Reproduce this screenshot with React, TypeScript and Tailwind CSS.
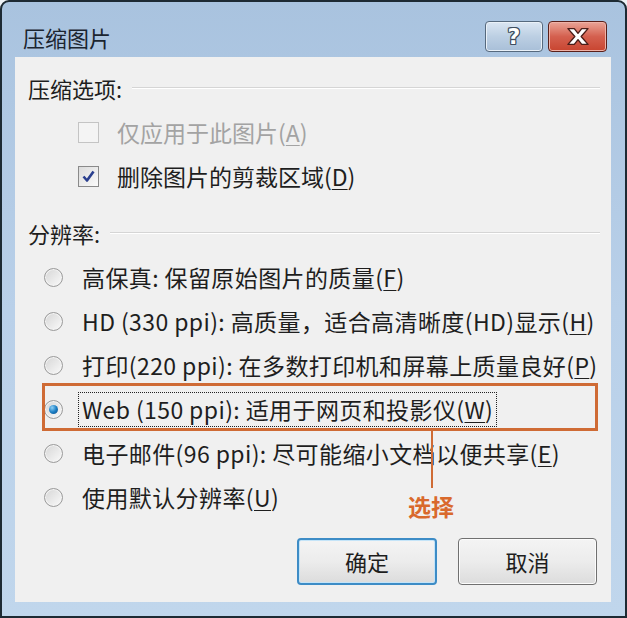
import React from "react";

const FONT = { fontFamily: '"Noto Sans CJK SC", "Noto Sans", sans-serif' };

function Mn({ c }: { c: string }) {
  return <span className="underline underline-offset-[3px] decoration-1">{c}</span>;
}

function Checkbox({ checked, disabled }: { checked?: boolean; disabled?: boolean }) {
  return (
    <div
      className={`w-[21px] h-[21px] border ${disabled ? "border-[#c4c4c4] bg-[#f4f4f4]" : "border-[#8a8a8a] bg-linear-to-br from-[#dcdcdc] to-[#fbfbfb]"} flex items-center justify-center`}
    >
      {checked && (
        <svg width="15" height="15" viewBox="0 0 15 15">
          <path d="M2.5 7.5 L6 11.5 L12.5 2.5" fill="none" stroke="#2a3f8f" strokeWidth="2.6" strokeLinejoin="round" />
        </svg>
      )}
    </div>
  );
}

function Radio({ checked }: { checked?: boolean }) {
  return (
    <div className="w-[19px] h-[19px] rounded-full border border-[#9a9a9a] bg-linear-to-br from-[#d6d6d6] to-[#fafafa] flex items-center justify-center shadow-[inset_0_0_0_1px_#f4f4f4]">
      {checked && (
        <div className="w-[9px] h-[9px] rounded-full bg-radial-[at_35%_30%] from-[#8fd0f5] via-[#1c7fc4] to-[#0c4a86]" />
      )}
    </div>
  );
}

function SectionHeader({ label }: { label: string }) {
  return (
    <div className="h-[44px] flex items-center pl-[13px] pr-[11px] gap-[10px]">
      <span className="text-[22px] text-[#1e1e1e] leading-none">{label}</span>
      <div className="flex-1 h-[2px] border-t border-[#d5d5d5] border-b-white border-b" />
    </div>
  );
}

export default function App() {
  return (
    <div className="w-[627px] h-[618px] bg-[#eef2f6]" style={FONT}>
      <div className="w-[627px] h-[618px] rounded-t-[9px] border-[2px] border-[#1d2a33] bg-linear-to-b from-[#a9c3df] via-[#b9d0e9] to-[#c0d6ec] flex flex-col">
        {/* title bar */}
        <div className="h-[55px] flex items-start pl-[21px] pr-[18px]">
          <div className="pt-[24px] text-[22px] leading-none text-[#1b2530]">压缩图片</div>
          <div className="flex-1" />
          <div className="flex gap-[5px] pt-[19px]">
            <div className="w-[58px] h-[31px] rounded-[4px] border border-[#56697d] bg-linear-to-b from-[#dbe6f2] via-[#bccfe3] to-[#a8bfd8] flex items-center justify-center shadow-[inset_0_0_0_1px_#eaf1f8]">
              <span
                className="text-[22px] font-bold leading-none text-white"
                style={{ textShadow: "1px 0 #3e4e60, -1px 0 #3e4e60, 0 1px #3e4e60, 0 -1px #3e4e60, 1px 1px #3e4e60, -1px -1px #3e4e60, 1px -1px #3e4e60, -1px 1px #3e4e60", fontFamily: '"DejaVu Sans", sans-serif' }}
              >
                ?
              </span>
            </div>
            <div className="w-[59px] h-[31px] rounded-[4px] border border-[#5a1f19] bg-linear-to-b from-[#e9a497] via-[#d4604f] to-[#c8442f] flex items-center justify-center shadow-[inset_0_0_0_1px_#efb3a8]">
              <svg width="26" height="19" viewBox="0 0 24 18">
                <path
                  d="M2.5 1.5 H8.5 L12 6 L15.5 1.5 H21.5 L15 9 L21.5 16.5 H15.5 L12 12 L8.5 16.5 H2.5 L9 9 Z"
                  fill="#ffffff"
                  stroke="#4a1d18"
                  strokeWidth="1.3"
                  strokeLinejoin="round"
                />
              </svg>
            </div>
          </div>
        </div>
        {/* frame body */}
        <div className="flex-1 pl-[13px] pr-[14px] pb-[14px] flex">
          <div className="flex-1 bg-[#f0f0f0] relative flex flex-col pt-[9px]">
            <SectionHeader label="压缩选项:" />
            <div className="h-[44px] flex items-center pl-[63px] gap-[18px]">
              <Checkbox disabled />
              <span className="text-[23px] leading-none text-[#a3a3a3]">
                仅应用于此图片(<Mn c="A" />)
              </span>
            </div>
            <div className="h-[44px] flex items-center pl-[63px] gap-[18px]">
              <Checkbox checked />
              <span className="text-[23px] leading-none text-[#1e1e1e]">
                删除图片的剪裁区域(<Mn c="D" />)
              </span>
            </div>
            <div className="h-[13px]" />
            <SectionHeader label="分辨率:" />
            {[
              { t: "高保真: 保留原始图片的质量(", k: "F" },
              { t: "HD (330 ppi): 高质量，适合高清晰度(HD)显示(", k: "H" },
              { t: "打印(220 ppi): 在多数打印机和屏幕上质量良好(", k: "P" },
              { t: "Web (150 ppi): 适用于网页和投影仪(", k: "W", sel: true },
              { t: "电子邮件(96 ppi): 尽可能缩小文档以便共享(", k: "E" },
              { t: "使用默认分辨率(", k: "U" },
            ].map((r) => (
              <div key={r.k} className="h-[44px] flex items-center pl-[29px] gap-[19px]">
                <Radio checked={r.sel} />
                {r.sel ? (
                  <span className="-ml-[4px] text-[23px] tracking-[0.4px] leading-none text-[#1e1e1e] border border-dotted border-[#222] px-[3px] py-[5px]">
                    {r.t}
                    <Mn c={r.k} />)
                  </span>
                ) : (
                  <span className="text-[23px] tracking-[0.4px] leading-none text-[#1e1e1e]">
                    {r.t}
                    <Mn c={r.k} />)
                  </span>
                )}
              </div>
            ))}
            <div className="flex-1" />
            <div className="flex justify-end gap-[21px] pr-[14px] pb-[17px]">
              <button className="w-[140px] h-[47px] rounded-[4px] border-[2px] border-[#3d8cc6] bg-linear-to-b from-[#f4f4f4] via-[#ececec] to-[#dcdcdc] shadow-[inset_0_0_0_1px_#c4e4f8] text-[22px] text-[#1e1e1e] flex items-center justify-center">
                确定
              </button>
              <button className="w-[139px] h-[47px] rounded-[4px] border border-[#707070] bg-linear-to-b from-[#f4f4f4] via-[#ececec] to-[#dcdcdc] shadow-[inset_0_0_0_1px_#fcfcfc] text-[22px] text-[#1e1e1e] flex items-center justify-center">
                取消
              </button>
            </div>
            {/* annotation overlay */}
            <div className="absolute left-[27px] top-[326px] w-[556px] h-[48px] border-[3px] border-[#cf6b35]" />
            <div className="absolute left-[416px] top-[373px] w-[2px] h-[58px] bg-[#cf6b35]" />
            <div className="absolute left-[393px] top-[438px] text-[23px] font-bold leading-none text-[#d9692c]">选择</div>
          </div>
        </div>
      </div>
    </div>
  );
}
